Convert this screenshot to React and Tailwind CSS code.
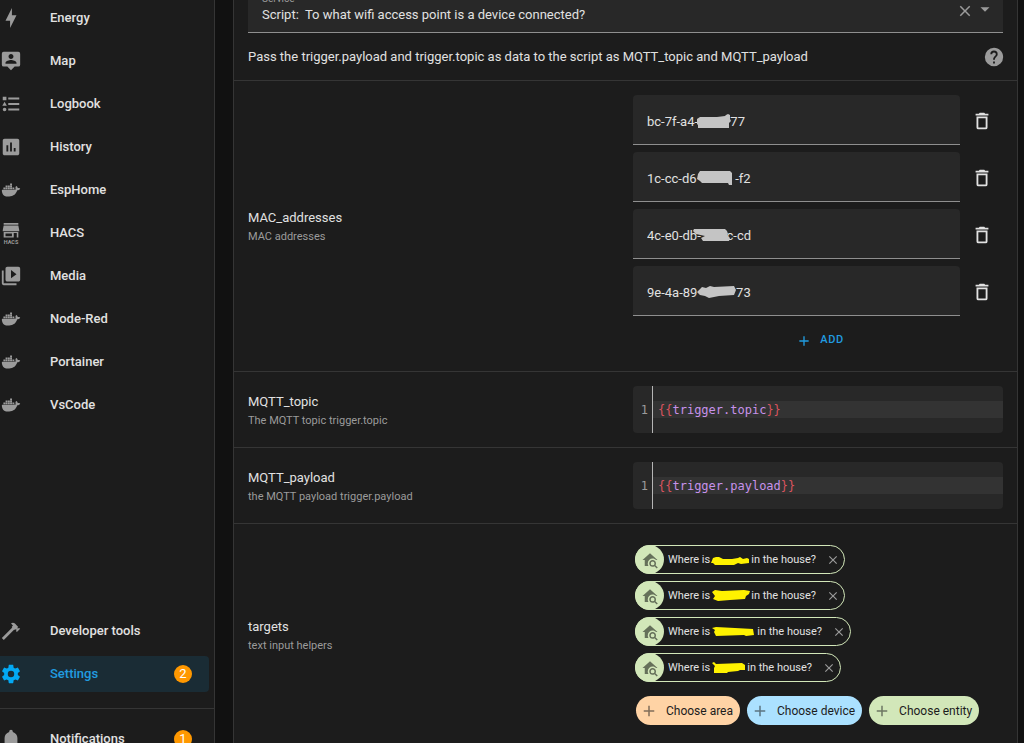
import React, { useState } from "react";

const paths = {
  bolt: "M11 15H6L13 1V9H18L11 23V15Z",
  map: "M20,2H4A2,2 0 0,0 2,4V16A2,2 0 0,0 4,18H8L12,22L16,18H20A2,2 0 0,0 22,16V4A2,2 0 0,0 20,2M12,4.3C13.5,4.3 14.7,5.5 14.7,7C14.7,8.5 13.5,9.7 12,9.7C10.5,9.7 9.3,8.5 9.3,7C9.3,5.5 10.5,4.3 12,4.3M18,15H6V14.1C6,12.1 10,11 12,11C14,11 18,12.1 18,14.1V15Z",
  list: "M5,9.5L7.5,14H2.5L5,9.5M3,4H7V8H3V4M5,20A2,2 0 0,0 7,18A2,2 0 0,0 5,16A2,2 0 0,0 3,18A2,2 0 0,0 5,20M9,5V7H21V5H9M9,19H21V17H9V19M9,13H21V11H9V13Z",
  chart: "M9 17H7V10H9V17M13 17H11V7H13V17M17 17H15V13H17V17M19 3H5C3.9 3 3 3.9 3 5V19C3 20.1 3.9 21 5 21H19C20.1 21 21 20.1 21 19V5C21 3.9 20.1 3 19 3Z",
  docker:
    "M21.81 10.25C21.75 10.21 21.25 9.82 20.17 9.82C19.89 9.82 19.61 9.85 19.33 9.9C19.12 8.5 17.95 7.79 17.9 7.76L17.61 7.59L17.43 7.86C17.19 8.22 17 8.63 16.92 9.05C16.72 9.85 16.84 10.61 17.25 11.26C16.76 11.54 15.96 11.61 15.79 11.61H2.62C2.28 11.61 2 11.89 2 12.24C2 13.39 2.18 14.54 2.58 15.62C3.03 16.81 3.71 17.69 4.58 18.23C5.56 18.83 7.17 19.17 9 19.17C9.79 19.17 10.61 19.1 11.42 18.95C12.54 18.75 13.62 18.36 14.61 17.79C15.43 17.32 16.16 16.72 16.78 16C17.82 14.83 18.43 13.5 18.89 12.35H19.07C20.23 12.35 20.94 11.89 21.33 11.5C21.59 11.26 21.78 10.97 21.92 10.63L22 10.39L21.81 10.25M3.7 9.3h2.1v1.9H3.7zM6.1 9.3h2.1v1.9H6.1zM8.6 9.3h2.1v1.9H8.6zM11 9.3h2.1v1.9H11zM13.5 9.3h2.1v1.9h-2.1zM6.1 7.1h2.1V9H6.1zM8.6 7.1h2.1V9H8.6zM11 7.1h2.1V9H11zM11 4.8h2.1v1.9H11z",
  media: "M4 6H2v14c0 1.1.9 2 2 2h14v-2H4V6zM20 2H8c-1.1 0-2 .9-2 2v12c0 1.1.9 2 2 2h12c1.1 0 2-.9 2-2V4c0-1.1-.9-2-2-2zM12 14.5v-9l6 4.5-6 4.5z",
  hammer: "M2,19.63L13.43,8.2L12.72,7.5L14.14,6.07L12,3.89C13.2,2.7 15.09,2.7 16.27,3.89L19.87,7.5L18.45,8.91H21.29L22,9.62L18.45,13.21L17.74,12.5V9.62L16.27,11.04L15.56,10.33L4.13,21.76L2,19.63Z",
  cog: "M12,15.5A3.5,3.5 0 0,1 8.5,12A3.5,3.5 0 0,1 12,8.5A3.5,3.5 0 0,1 15.5,12A3.5,3.5 0 0,1 12,15.5M19.43,12.97C19.47,12.65 19.5,12.33 19.5,12C19.5,11.67 19.47,11.34 19.43,11L21.54,9.37C21.73,9.22 21.78,8.95 21.66,8.73L19.66,5.27C19.54,5.05 19.27,4.96 19.05,5.05L16.56,6.05C16.04,5.66 15.5,5.32 14.87,5.07L14.5,2.42C14.46,2.18 14.25,2 14,2H10C9.75,2 9.54,2.18 9.5,2.42L9.13,5.07C8.5,5.32 7.96,5.66 7.44,6.05L4.95,5.05C4.73,4.96 4.46,5.05 4.34,5.27L2.34,8.73C2.21,8.95 2.27,9.22 2.46,9.37L4.57,11C4.53,11.34 4.5,11.67 4.5,12C4.5,12.33 4.53,12.65 4.57,12.97L2.46,14.63C2.27,14.78 2.21,15.05 2.34,15.27L4.34,18.73C4.46,18.95 4.73,19.03 4.95,18.95L7.44,17.94C7.96,18.34 8.5,18.68 9.13,18.93L9.5,21.58C9.54,21.82 9.75,22 10,22H14C14.25,22 14.46,21.82 14.5,21.58L14.87,18.93C15.5,18.67 16.04,18.34 16.56,17.94L19.05,18.95C19.27,19.03 19.54,18.95 19.66,18.73L21.66,15.27C21.78,15.05 21.73,14.78 21.54,14.63L19.43,12.97Z",
  bell: "M21,19V20H3V19L5,17V11C5,7.9 7.03,5.17 10,4.29C10,4.19 10,4.1 10,4A2,2 0 0,1 12,2A2,2 0 0,1 14,4C14,4.1 14,4.19 14,4.29C16.97,5.17 19,7.9 19,11V17L21,19M14,21A2,2 0 0,1 12,23A2,2 0 0,1 10,21",
  trash: "M6,19A2,2 0 0,0 8,21H16A2,2 0 0,0 18,19V7H6V19M8,9H16V19H8V9M15.5,4L14.5,3H9.5L8.5,4H5V6H19V4H15.5Z",
  help: "M15.07,11.25L14.17,12.17C13.45,12.89 13,13.5 13,15H11V14.5C11,13.39 11.45,12.39 12.17,11.67L13.41,10.41C13.78,10.05 14,9.55 14,9C14,7.89 13.1,7 12,7A2,2 0 0,0 10,9H8A4,4 0 0,1 12,5A4,4 0 0,1 16,9C16,9.88 15.64,10.67 15.07,11.25M13,19H11V17H13V19M12,2A10,10 0 0,0 2,12A10,10 0 0,0 12,22A10,10 0 0,0 22,12C22,6.47 17.5,2 12,2Z",
  close: "M19,6.41L17.59,5L12,10.59L6.41,5L5,6.41L10.59,12L5,17.59L6.41,19L12,13.41L17.59,19L19,17.59L13.41,12L19,6.41Z",
  plus: "M19,13H13V19H11V13H5V11H11V5H13V11H19V13Z",
  down: "M6,7L12,13L18,7H6Z",
  homeSearch:
    "M15.5,12C18,12 20,14 20,16.5C20,17.38 19.75,18.21 19.31,18.9L22.39,22L21,23.39L17.88,20.32C17.19,20.75 16.37,21 15.5,21C13,21 11,19 11,16.5C11,14 13,12 15.5,12M15.5,14A2.5,2.5 0 0,0 13,16.5A2.5,2.5 0 0,0 15.5,19A2.5,2.5 0 0,0 18,16.5A2.5,2.5 0 0,0 15.5,14M5,20V12H2L12,3L22,12H20.2C19,10.8 17.3,10 15.5,10A6.5,6.5 0 0,0 9,16.5C9,17.8 9.4,19 10,20H5Z",
};

function Icon({ name, className }) {
  return (
    <svg viewBox="0 0 24 24" className={className} fill="currentColor" fillRule="evenodd" aria-hidden="true">
      <path d={paths[name]} />
    </svg>
  );
}

function HacsIcon({ className }) {
  return (
    <svg viewBox="0 0 24 24" className={className} fill="currentColor" aria-hidden="true">
      <path d="M4 1h16v2H4zM4 3.8h16L21 9v1.200H3V9zM4 11h16v6h-1.700v-5h-3.300v5H4zM6 12.500v3h7v-3z" fillRule="evenodd" />
      <text x="12" y="23.500" fontSize="6" fontWeight="700" textAnchor="middle" fontFamily="Roboto, sans-serif">
        HACS
      </text>
    </svg>
  );
}

const navItems = [
  ["Energy", "bolt"],
  ["Map", "map"],
  ["Logbook", "list"],
  ["History", "chart"],
  ["EspHome", "docker"],
  ["HACS", "hacs"],
  ["Media", "media"],
  ["Node-Red", "docker"],
  ["Portainer", "docker"],
  ["VsCode", "docker"],
];

function NavItem({ label, icon, badge, active }) {
  return (
    <a
      href="#"
      aria-current={active ? "page" : undefined}
      className={
        "mr-[5px] flex h-9 shrink-0 items-center gap-7 rounded-r pr-[17px] text-[13px] font-medium " +
        (active ? "bg-[#1a2c35] text-[#219ce0]" : "text-[#e1e1e1]")
      }
    >
      {icon === "hacs" ? (
        <HacsIcon className="size-[22px] text-[#9b9b9b]" />
      ) : (
        <Icon name={icon} className={"size-[22px] shrink-0 " + (active ? "text-[#03a9f4]" : "text-[#9b9b9b]")} />
      )}
      <span className="flex-1">{label}</span>
      {badge && (
        <span className="flex size-[18px] items-center justify-center rounded-full bg-[#ff9800] text-[13px] font-normal text-white">
          {badge}
        </span>
      )}
    </a>
  );
}

const macs = [
  { value: "bc-7f-a4-          77", d: "M0 8L3 6L20 6L28 5L29 4L31 3L33 4L33 8L34 10L32 12L32 17L1 17L1 14L0 13Z" },
  { value: "1c-cc-d6            -f2", d: "M1 6L3 3L33 3L35 5L35 17L32 17L31 15L5 15L3 13L0 11Z" },
  { value: "4c-e0-db-        c-cd", d: "M-4 6L-3 4L28 4L30 6L31 9L30 10L33 13L32 16L6 16L4 13L8 11L-1 9Z" },
  { value: "9e-4a-89            73", d: "M0 10L5 5L9 6L13 4L17 5L37 4L39 8L37 13L22 14L12 16L8 14L3 13Z" },
];

function MacField({ index, value, d }) {
  return (
    <div className="flex items-center">
      <div className="relative min-w-0 flex-1">
        <input
          aria-label={"MAC address " + (index + 1)}
          defaultValue={value}
          className="block h-[50px] w-full rounded-t border-b border-[#8f8f8f] bg-[#282828] px-[14px] pt-[3px] text-[13px] text-[#e1e1e1] outline-none"
        />
        <svg viewBox="0 0 40 18" className="pointer-events-none absolute left-16 top-4 h-[18px] w-10 overflow-visible" aria-hidden="true">
          <path d={d} fill="#c4c4c4" />
        </svg>
      </div>
      <button type="button" aria-label="Delete" className="flex w-[43px] justify-center pt-0.5 text-[#e1e1e1]">
        <Icon name="trash" className="size-[22px]" />
      </button>
    </div>
  );
}

function Row({ label, hint, children, className = "py-[14px]" }) {
  return (
    <section className={"flex items-center border-t border-[#353535] px-[14px] " + className}>
      <div className="min-w-0 flex-1 pt-0.5">
        <h3 className="text-[13px] leading-[19px] text-[#e1e1e1]">{label}</h3>
        <p className="text-[11px] leading-[19px] text-[#9b9b9b]">{hint}</p>
      </div>
      <div className="w-[370px] shrink-0">{children}</div>
    </section>
  );
}

function CodeEditor({ label, code }) {
  return (
    <div className="flex rounded bg-[#282828] font-['DejaVu_Sans_Mono',monospace] text-[12px] leading-[17px]">
      <div className="w-5 border-r border-[#b5b5b5] pb-[14px] pt-4 pr-1 text-right text-[#9b9b9b]">1</div>
      <div className="flex-1 py-[15px]">
        <div
          role="textbox"
          aria-label={label}
          contentEditable
          suppressContentEditableWarning
          spellCheck={false}
          className="bg-[#333333] pl-[5px] pt-0.5 leading-[15px] text-[#c792ea] outline-none"
        >
          <span className="text-[#d9535f]">{"{{"}</span>
          {code}
          <span className="text-[#d9535f]">{"}}"}</span>
        </div>
      </div>
    </div>
  );
}

const chips = [
  { w: 41, d: "M1 11L3 6L6 5L9 5L13 7L22 7L28 6L30 5L33 7L37 6L39 7L39 11L31 12L28 11L24 13L5 13L3 11Z" },
  { w: 41, d: "M2 4L5 2L12 3L34 2L40 3L39 6L36 8L35 11L20 12L8 13L3 11L5 8Z" },
  { w: 47, d: "M2 4L6 3L25 4L43 5L44 11L36 12L34 11L6 12L4 8L5 6Z" },
  { w: 37, d: "M2 3L4 2L6 4L32 3L35 5L35 10L30 10L28 11L18 12L17 13L4 13L4 8L5 6Z" },
];

function Chip({ w, d }) {
  return (
    <div className="flex h-[29px] items-center rounded-full border border-[#d2e7b9] pr-1 text-[11px] text-[#e1e1e1]">
      <span className="-my-px -ml-px flex size-[29px] items-center justify-center rounded-full bg-[#d2e7b9] text-[#65705a]">
        <Icon name="homeSearch" className="size-[18px]" />
      </span>
      <span className="ml-1 whitespace-nowrap pt-0.5">Where is</span>
      <svg viewBox={"0 0 " + w + " 16"} width={w} height="16" className="shrink-0" aria-hidden="true">
        <path d={d} fill="#fff200" />
      </svg>
      <span className="whitespace-nowrap pt-0.5">in the house?</span>
      <button type="button" aria-label="Remove" className="ml-[10px] text-[#9b9b9b]">
        <Icon name="close" className="size-[14px]" />
      </button>
    </div>
  );
}

function ChooseButton({ children, color }) {
  return (
    <button type="button" className={"flex h-[29px] items-center gap-2 whitespace-nowrap rounded-full pl-1 pr-[7px] text-[12px] text-[#1c1c1c] " + color}>
      <Icon name="plus" className="size-[18px] opacity-55" />
      {children}
    </button>
  );
}

export default function App() {
  const [service, setService] = useState("Script:  To what wifi access point is a device connected?");
  return (
    <div className="flex h-screen overflow-hidden bg-[#111111] font-[Roboto,sans-serif]">
      <aside className="flex w-[215px] shrink-0 flex-col border-r border-[#353535] bg-[#1c1c1c]">
        <nav className="flex min-h-0 flex-1 flex-col gap-[7px] overflow-hidden">
          {navItems.map(([label, icon]) => (
            <NavItem key={label} label={label} icon={icon} />
          ))}
        </nav>
        <div className="flex h-[130px] shrink-0 flex-col overflow-hidden">
          <NavItem label="Developer tools" icon="hammer" />
          <div className="h-[7px] shrink-0" />
          <NavItem label="Settings" icon="cog" badge="2" active />
          <div className="mt-4 shrink-0 border-t border-[#353535] pt-3">
            <NavItem label="Notifications" icon="bell" badge="1" />
          </div>
        </div>
      </aside>

      <main className="min-w-0 flex-1 pl-[18px] pr-1.5">
        <div className="-mt-[18px] border-x border-[#353535] bg-[#1c1c1c]">
          <div className="px-[14px]">
            <div className="flex h-[51px] items-end border-b border-[#8f8f8f] bg-[#282828] pb-2 pl-[14px] pr-[9px]">
              <div className="flex min-w-0 flex-1 flex-col">
                <label htmlFor="service" className="text-[10px] leading-[10px] text-[#9b9b9b]">
                  Service
                </label>
                <input
                  id="service"
                  value={service}
                  onChange={(e) => setService(e.target.value)}
                  className="h-5 w-full bg-transparent text-[13px] text-[#e1e1e1] outline-none"
                />
              </div>
              <div className="flex items-center gap-0.5 pb-1 text-[#9b9b9b]">
                <button type="button" aria-label="Clear" onClick={() => setService("")}>
                  <Icon name="close" className="size-[18px]" />
                </button>
                <button type="button" aria-label="Open">
                  <Icon name="down" className="size-[18px]" />
                </button>
              </div>
            </div>
          </div>
          <div className="flex h-[47px] items-center justify-between pl-[14px] pr-3">
            <p className="text-[13px] text-[#e1e1e1]">
              Pass the trigger.payload and trigger.topic as data to the script as MQTT_topic and MQTT_payload
            </p>
            <a href="#" aria-label="Help" className="text-[#9b9b9b]">
              <Icon name="help" className="size-[22px]" />
            </a>
          </div>

          <Row label="MAC_addresses" hint="MAC addresses">
            <div className="flex flex-col gap-[7px]">
              {macs.map((m, i) => (
                <MacField key={i} index={i} value={m.value} d={m.d} />
              ))}
            </div>
            <div className="mt-2 flex justify-center pl-1">
              <button type="button" className="flex h-[33px] items-center gap-2 text-[11px] font-medium tracking-wider text-[#219ce0]">
                <Icon name="plus" className="size-4" />
                ADD
              </button>
            </div>
          </Row>
          <Row label="MQTT_topic" hint="The MQTT topic trigger.topic">
            <CodeEditor label="MQTT_topic" code="trigger.topic" />
          </Row>
          <Row label="MQTT_payload" hint="the MQTT payload trigger.payload">
            <CodeEditor label="MQTT_payload" code="trigger.payload" />
          </Row>
          <Row label="targets" hint="text input helpers" className="py-[21px]">
            <div className="flex flex-col items-start gap-[7px] pl-0.5">
              {chips.map((c, i) => (
                <Chip key={i} w={c.w} d={c.d} />
              ))}
            </div>
            <div className="mt-[14px] flex gap-[7px] pl-[3px]">
              <ChooseButton color="bg-[#ffd3a5]">Choose area</ChooseButton>
              <ChooseButton color="bg-[#abe1ff]">Choose device</ChooseButton>
              <ChooseButton color="bg-[#d2e7b9]">Choose entity</ChooseButton>
            </div>
          </Row>
        </div>
      </main>
    </div>
  );
}
